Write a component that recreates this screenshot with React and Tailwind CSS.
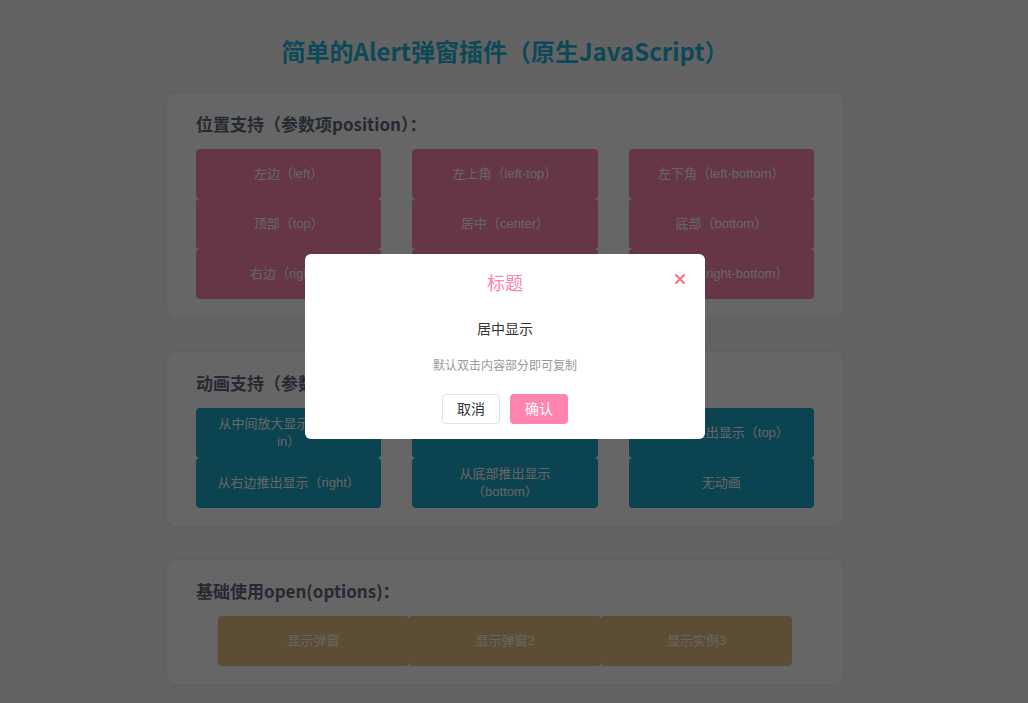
import React from 'react'

const positions = [
  '左边（left）',
  '左上角（left-top）',
  '左下角（left-bottom）',
  '顶部（top）',
  '居中（center）',
  '底部（bottom）',
  '右边（right）',
  '右上角（right-top）',
  '右下角（right-bottom）',
]

const animations = [
  '从中间放大显示（zoom-in）',
  '从左边推出显示（left）',
  '从顶部推出显示（top）',
  '从右边推出显示（right）',
  '从底部推出显示（bottom）',
  '无动画',
]

const basics = ['显示弹窗', '显示弹窗2', '显示实例3']

const bodyFont = { fontFamily: '"Liberation Sans", "Noto Sans CJK SC", sans-serif' }
const headFont = { fontFamily: '"Noto Sans CJK SC", "Liberation Sans", sans-serif' }

function Card({ title, className = 'mb-8', children }) {
  return (
    <div
      className={`rounded-[10px] border border-[#f0f0f0] bg-white px-[29px] pt-[18px] pb-[18px] shadow-[0_1px_6px_rgba(0,0,0,0.04)] ${className}`}
    >
      <h2 className="mb-3 h-[26px] text-[17px] leading-[26px] font-bold text-[#5e6a7e]" style={headFont}>
        {title}
      </h2>
      {children}
    </div>
  )
}

function GridButtons({ items, color }) {
  return (
    <div className="grid grid-cols-3 gap-x-[31px]">
      {items.map((t) => (
        <button
          key={t}
          className={`flex h-[50px] items-center justify-center rounded-[4px] px-5 text-center text-[13px] leading-[18px] text-white ${color}`}
          style={bodyFont}
        >
          {t}
        </button>
      ))}
    </div>
  )
}

export default function App() {
  return (
    <div className="relative h-[703px] w-full overflow-hidden bg-[#f7f7f7]" style={bodyFont}>
      <div className="w-[1010px] pt-[33px]">
        <h1 className="mb-[23px] text-center text-[24px] leading-[36px] font-bold text-[#1fb3dc]" style={headFont}>
          简单的Alert弹窗插件（原生JavaScript）
        </h1>
        <div className="mx-auto w-[678px]">
          <Card title="位置支持（参数项position）：" className="mb-[33px]">
            <GridButtons items={positions} color="bg-[#ff85af]" />
          </Card>
          <Card title="动画支持（参数项animation）：">
            <GridButtons items={animations} color="bg-[#1ca8c8]" />
          </Card>
          <Card title="基础使用open(options)：">
            <div className="flex justify-center">
              {basics.map((t) => (
                <button
                  key={t}
                  className="h-[50px] w-[31%] rounded-[4px] bg-[#e6c084] text-[13px] text-white"
                  style={bodyFont}
                >
                  {t}
                </button>
              ))}
            </div>
          </Card>
        </div>
      </div>

      <div className="fixed inset-0 bg-black/60" />

      <div className="fixed top-[254px] left-[305px] w-[400px] rounded-[6px] bg-white px-5 pt-[15px] pb-[15px] text-center">
        <div className="h-[26px] text-[18px] leading-[26px] text-[#ff85af]" style={headFont}>
          标题
        </div>
        <button className="absolute top-[19px] right-[19px] flex h-[12px] w-[12px] items-center justify-center">
          <svg width="12" height="12" viewBox="0 0 12 12">
            <path d="M2 2L10 10M10 2L2 10" stroke="#ff6b7f" strokeWidth="2" strokeLinecap="round" />
          </svg>
        </button>
        <p className="mt-[24px] text-[14px] leading-5 text-[#333]">居中显示</p>
        <p className="mt-[18px] text-[12px] leading-[18px] text-[#999]">默认双击内容部分即可复制</p>
        <div className="mt-[19px] flex justify-center gap-[10px]">
          <button className="h-[30px] w-[58px] rounded-[4px] border border-[#e2e2ea] bg-white text-[14px] text-[#333]">
            取消
          </button>
          <button className="h-[30px] w-[58px] rounded-[4px] bg-[#ff85af] text-[14px] text-white">确认</button>
        </div>
      </div>
    </div>
  )
}
